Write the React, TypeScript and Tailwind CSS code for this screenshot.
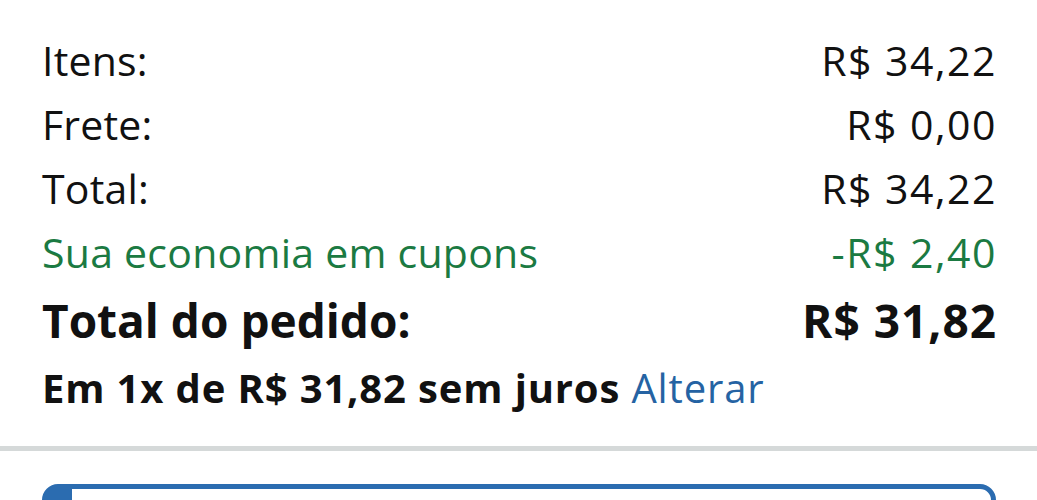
const rows = [
  { label: 'Itens:', value: 'R$ 34,22' },
  { label: 'Frete:', value: 'R$ 0,00' },
  { label: 'Total:', value: 'R$ 34,22' },
];

export default function App() {
  return (
    <div className="w-[1037px] h-[500px] overflow-hidden bg-white text-[#111] font-['Open_Sans',sans-serif]">
      {/* resumo do pedido */}
      <div className="pl-[42px] pr-[40px] pt-[28px]">
        {rows.map((r) => (
          <div key={r.label} className="flex justify-between text-[41px] leading-[64px]">
            <span className="tracking-[0.2px]">{r.label}</span>
            <span className="tracking-[1.5px]">{r.value}</span>
          </div>
        ))}
        <div className="flex justify-between text-[41px] leading-[64px] text-[#1b7a42]">
          <span className="tracking-[0.25px]">Sua economia em cupons</span>
          <span className="tracking-[1.5px]">-R$ 2,40</span>
        </div>
        <div className="flex justify-between text-[46px] leading-[72px] font-bold">
          <span>Total do pedido:</span>
          <span className="tracking-[1px]">R$ 31,82</span>
        </div>
        <div className="text-[40px] leading-[60px] font-bold tracking-[0.85px] mt-[2px]">
          Em 1x de R$ 31,82 sem juros{' '}
          <span className="font-normal text-[#2563a3]">Alterar</span>
        </div>
      </div>

      <div className="mt-[28px] h-[5px] bg-[#d5d9d9]" />

      <div className="pl-[42px] pr-[41px] pt-[33px]">
        <div className="h-[60px] rounded-[16px] border-[5px] border-l-[30px] border-[#2b6cb0] bg-white" />
      </div>
    </div>
  );
}
